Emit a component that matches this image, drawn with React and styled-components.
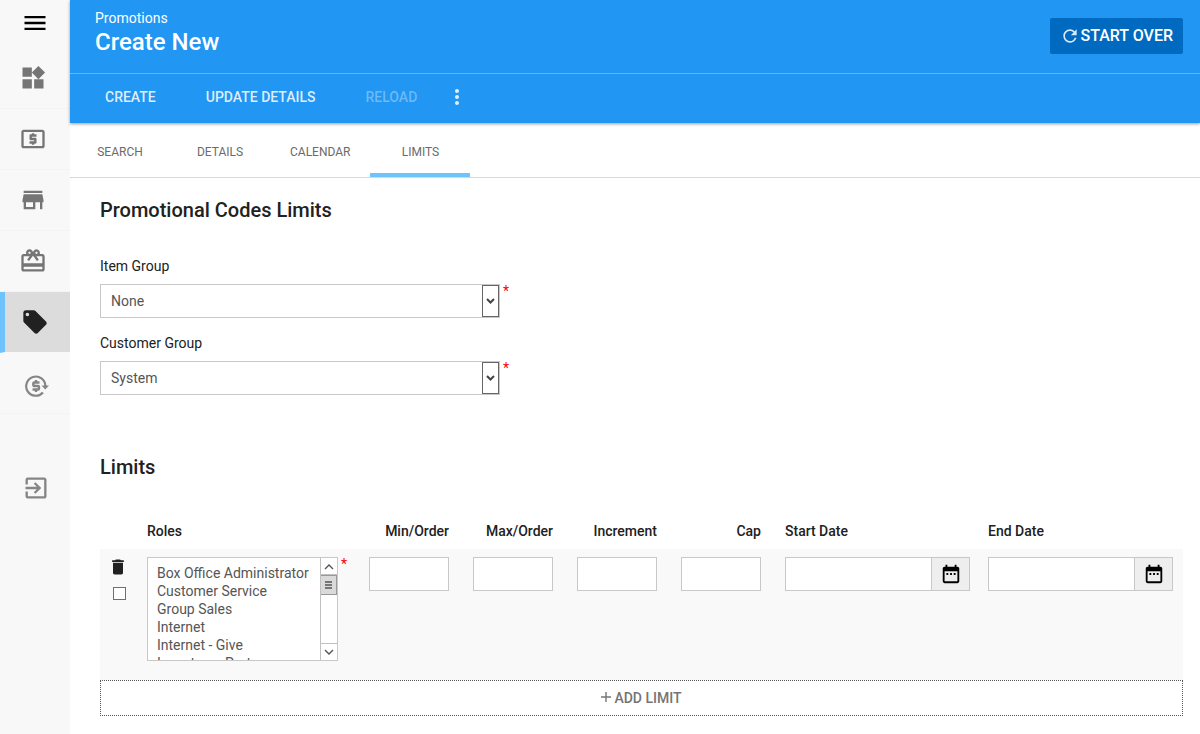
import React, { useRef, useState } from "react";
import styled, { createGlobalStyle, css } from "styled-components";
import {
  MdMenu,
  MdWidgets,
  MdLocalAtm,
  MdStore,
  MdCardGiftcard,
  MdLocalOffer,
  MdExitToApp,
  MdRefresh,
  MdMoreVert,
  MdDelete,
  MdDateRange,
} from "react-icons/md";

const GlobalStyle = createGlobalStyle`
  *, *::before, *::after {
    box-sizing: border-box;
  }

  body {
    margin: 0;
    background: #fff;
    color: #212121;
    font: 14px/20px Roboto, "Liberation Sans", sans-serif;
  }

  button, input, select {
    font: inherit;
    color: inherit;
    margin: 0;
    border-radius: 0;
  }

  button {
    padding: 0;
    border: 0;
    background: none;
    cursor: pointer;
  }
`;

const Page = styled.div`
  display: flex;
  min-height: 100vh;
`;

const Sidebar = styled.nav`
  flex: 0 0 70px;
  display: flex;
  flex-direction: column;
  background: #f8f8f8;
  color: #757575;
`;

const MenuButton = styled.button`
  display: flex;
  align-items: center;
  justify-content: center;
  height: 48px;
  padding-bottom: 2px;
  color: #000;
`;

const SideLink = styled.a`
  display: flex;
  align-items: center;
  height: 61px;
  padding-left: 19px;
  border-bottom: 1px solid #f4f4f4;
  color: inherit;

  ${(p) =>
    p.$muted &&
    css`
      padding-top: 6px;
      padding-left: 22px;
      color: #858585;
    `}

  ${(p) =>
    p.$active &&
    css`
      padding-left: 16px;
      border-left: 5px solid #6ec3ff;
      border-bottom-color: #f8f8f8;
      background: #dcdcdc;
      background-clip: padding-box;
      color: #212121;
    `}

  ${(p) =>
    p.$last &&
    css`
      margin-top: 40px;
      border-bottom: 0;
    `}
`;

const Main = styled.div`
  flex: 1;
  min-width: 0;
`;

const Header = styled.header`
  position: relative;
  background: #2196f3;
  color: #fff;
  box-shadow: 0 1px 3px rgba(0, 0, 0, 0.4);
`;

const TitleBar = styled.div`
  display: flex;
  align-items: center;
  justify-content: space-between;
  height: 74px;
  padding: 0 17px 2px 25px;
  border-bottom: 1px solid #64b5f6;
`;

const TitleBlock = styled.div`
  padding-bottom: 7px;
`;

const Title = styled.h1`
  margin: 0;
  font-size: 24px;
  line-height: 28px;
  font-weight: 500;
`;

const StartOver = styled.button`
  display: flex;
  align-items: center;
  gap: 1px;
  height: 36px;
  padding: 1px 10px 0;
  border-radius: 2px;
  background: #0069c0;
  font-size: 16px;
  font-weight: 500;

  svg {
    opacity: 0.85;
  }
`;

const Toolbar = styled.div`
  display: flex;
  align-items: center;
  height: 49px;
  padding: 0 10px 3px;
`;

const ToolButton = styled.button`
  height: 100%;
  padding: 0 25px;
  color: rgba(255, 255, 255, 0.85);
  font-weight: 500;

  &:disabled {
    color: rgba(255, 255, 255, 0.35);
  }
`;

const MoreButton = styled.button`
  display: flex;
  align-items: center;
  height: 100%;
  padding-left: 3px;
  color: rgba(255, 255, 255, 0.85);
`;

const Tabs = styled.div`
  display: flex;
  height: 55px;
  border-bottom: 1px solid #d9d9d9;
`;

const Tab = styled.button`
  min-width: 100px;
  padding: 8px 20px 0;
  border-bottom: 4px solid ${(p) => (p.$active ? "#6ec3ff" : "transparent")};
  color: #6b6b6b;
  font-size: 12px;
`;

const Content = styled.main`
  padding: 20px 17px 18px 30px;
`;

const Heading = styled.h2`
  margin: 0;
  font-size: 20px;
  line-height: 24px;
  font-weight: 500;
`;

const Fields = styled.div`
  display: flex;
  flex-direction: column;
  gap: 15px;
  padding: 34px 0 60px;
`;

const Label = styled.label`
  display: block;
  margin-bottom: 8px;
`;

const Required = styled.span`
  color: #f00;
  line-height: 14px;
`;

const Control = styled.div`
  display: flex;
  align-items: flex-start;
  gap: 3px;
`;

const SelectWrap = styled.div`
  position: relative;
  width: 400px;

  svg {
    position: absolute;
    top: 1px;
    right: 1px;
    pointer-events: none;
  }
`;

const Select = styled.select`
  appearance: none;
  display: block;
  width: 100%;
  height: 34px;
  padding: 0 28px 0 10px;
  border: 1px solid #c8c8c8;
  background: #fff;
  color: #555;
`;

const Table = styled.table`
  width: 100%;
  margin-top: 42px;
  table-layout: fixed;
  border-collapse: collapse;

  th {
    height: 28px;
    padding: 0;
    font-weight: 500;
    text-align: left;
    vertical-align: top;
  }

  td {
    height: 131px;
    padding: 8px 0;
    background: #f9f9f9;
    vertical-align: top;
  }

  th.number,
  td.number {
    padding-right: 24px;
    text-align: right;
  }

  td.start {
    padding-right: 14px;
  }

  th.end {
    padding-left: 4px;
  }

  td.end {
    padding-right: 10px;
    padding-left: 4px;
  }
`;

const RowTools = styled.div`
  display: flex;
  flex-direction: column;
  align-items: flex-start;
  gap: 10px;
  padding-left: 8px;

  button {
    display: flex;
  }
`;

const Checkbox = styled.input`
  appearance: none;
  width: 13px;
  height: 13px;
  margin-left: 5px;
  border: 1px solid #707070;
  background: #fff;

  &:checked {
    background: #2196f3;
  }
`;

const ListBox = styled.div`
  display: flex;
  width: 191px;
  height: 104px;
  border: 1px solid #c8c8c8;
  background: #fff;
`;

const RoleList = styled.select`
  flex: 1;
  min-width: 0;
  height: 100%;
  padding: 7px 0 0 7px;
  border: 0;
  outline: 0;
  background: #fff;
  color: #555;
  scrollbar-width: none;

  option {
    min-height: 18px;
    padding: 0 2px;
    line-height: 18px;
  }
`;

const Scrollbar = styled.div`
  flex: 0 0 17px;
  display: flex;
  flex-direction: column;
  border-left: 1px solid #c0c0c0;
  color: #555;

  svg {
    display: block;
  }
`;

const ScrollButton = styled.button`
  flex: 0 0 17px;
  border: 0 solid #c0c0c0;
  border-${(p) => p.$edge}-width: 1px;
`;

const Track = styled.div`
  flex: 1;
`;

const Thumb = styled.div`
  height: 20px;
  padding-top: 1px;
  border: 1px solid #999;
  border-left: 0;
  background: #dadada;
`;

const TextInput = styled.input`
  width: 100%;
  min-width: 0;
  height: 34px;
  padding: 0 8px;
  border: 1px solid #c8c8c8;
  background: #fff;
`;

const DateGroup = styled.div`
  display: flex;
`;

const DateButton = styled.button`
  flex: 0 0 38px;
  display: flex;
  align-items: center;
  justify-content: center;
  height: 34px;
  border: 1px solid #c8c8c8;
  border-left: 0;
  background: #eee;
  color: #000;
`;

const AddLimit = styled.button`
  display: flex;
  align-items: center;
  justify-content: center;
  gap: 3px;
  width: 100%;
  height: 36px;
  border: 1px dotted #555;
  color: #757575;
  font-weight: 500;

  svg {
    margin-bottom: 2px;
  }
`;

const RefundIcon = () => (
  <svg width="28" height="28" viewBox="0 0 28 28" fill="none" stroke="currentColor">
    <path d="M21 20.500A9.600 9.600 0 1 1 23.400 14" strokeWidth="2.200" />
    <path d="M19.500 13.500H27L23.200 17.500Z" fill="currentColor" stroke="none" />
    <path
      d="M17.500 10.500H12.300Q11.300 10.500 11.300 11.500V13Q11.300 14 12.300 14H16Q17 14 17 15V16.500Q17 17.500 16 17.500H10.500M14 8V11M14 17V20"
      strokeWidth="2.400"
    />
  </svg>
);

const PlusIcon = () => (
  <svg width="10" height="10" stroke="currentColor">
    <path d="M5 0V10M0 5H10" strokeWidth="1.400" />
  </svg>
);

const links = [
  { name: "Dashboard", icon: <MdWidgets size={28} /> },
  { name: "Sales", icon: <MdLocalAtm size={28} /> },
  { name: "Store", icon: <MdStore size={28} /> },
  { name: "Gift cards", icon: <MdCardGiftcard size={28} /> },
  { name: "Promotions", icon: <MdLocalOffer size={28} />, active: true },
  { name: "Refunds", icon: <RefundIcon />, muted: true },
  { name: "Log out", icon: <MdExitToApp size={28} />, muted: true, last: true },
];

const tabs = ["SEARCH", "DETAILS", "CALENDAR", "LIMITS"];

const roles = [
  "Box Office Administrator",
  "Customer Service",
  "Group Sales",
  "Internet",
  "Internet - Give",
  "Inventory - Partner",
  "Inventory Manager",
  "Marketing",
  "Membership",
  "Operations",
  "Reports",
  "Reseller",
  "Supervisor",
  "System",
  "Ticket Agent",
  "Ticket Manager",
  "Usher",
  "Venue",
];

const numberColumns = ["Min/Order", "Max/Order", "Increment", "Cap"];

function SelectField({ id, label, value }) {
  return (
    <div>
      <Label htmlFor={id}>{label}</Label>
      <Control>
        <SelectWrap>
          <Select id={id} defaultValue={value}>
            <option>{value}</option>
          </Select>
          <svg width="17" height="32" fill="none">
            <rect x="0.500" y="0.500" width="16" height="31" fill="#fff" stroke="#666" />
            <path d="M5 14L8.500 17.500L12 14" stroke="#444" strokeWidth="2" />
          </svg>
        </SelectWrap>
        <Required>*</Required>
      </Control>
    </div>
  );
}

function RolePicker() {
  const list = useRef(null);
  const [offset, setOffset] = useState(0);

  // the track leaves 48px for the thumb to travel
  const onScroll = (e) => {
    const { scrollTop, scrollHeight, clientHeight } = e.currentTarget;
    setOffset((scrollTop / (scrollHeight - clientHeight)) * 48);
  };

  const scroll = (by) => list.current.scrollBy(0, by);

  return (
    <ListBox>
      <RoleList ref={list} multiple aria-label="Roles" onScroll={onScroll}>
        {roles.map((r) => (
          <option key={r}>{r}</option>
        ))}
      </RoleList>
      <Scrollbar>
        <ScrollButton type="button" $edge="bottom" aria-label="Scroll up" onClick={() => scroll(-18)}>
          <svg width="16" height="16" fill="none" stroke="currentColor">
            <path d="M4 11L8 7L12 11" strokeWidth="1.400" />
          </svg>
        </ScrollButton>
        <Track>
          <Thumb style={{ marginTop: offset }}>
            <svg width="15" height="16" fill="none" stroke="currentColor">
              <path d="M4 5H11M4 8H11M4 11H11" strokeWidth="1.500" />
            </svg>
          </Thumb>
        </Track>
        <ScrollButton type="button" $edge="top" aria-label="Scroll down" onClick={() => scroll(18)}>
          <svg width="16" height="16" fill="none" stroke="currentColor">
            <path d="M4 6L8 10L12 6" strokeWidth="1.400" />
          </svg>
        </ScrollButton>
      </Scrollbar>
    </ListBox>
  );
}

function DateField({ label }) {
  return (
    <DateGroup>
      <TextInput type="text" aria-label={label} />
      <DateButton type="button" aria-label={`Pick ${label}`}>
        <MdDateRange size={22} />
      </DateButton>
    </DateGroup>
  );
}

function App() {
  const [tab, setTab] = useState("LIMITS");

  return (
    <React.Fragment>
      <GlobalStyle />
      <Page>
        <Sidebar>
          <MenuButton aria-label="Menu">
            <MdMenu size={28} />
          </MenuButton>
          {links.map((l) => (
            <SideLink
              key={l.name}
              href="#"
              aria-label={l.name}
              $active={l.active}
              $muted={l.muted}
              $last={l.last}
            >
              {l.icon}
            </SideLink>
          ))}
        </Sidebar>
        <Main>
          <Header>
            <TitleBar>
              <TitleBlock>
                <div>Promotions</div>
                <Title>Create New</Title>
              </TitleBlock>
              <StartOver>
                <MdRefresh size={20} />
                START OVER
              </StartOver>
            </TitleBar>
            <Toolbar>
              <ToolButton>CREATE</ToolButton>
              <ToolButton>UPDATE DETAILS</ToolButton>
              <ToolButton disabled>RELOAD</ToolButton>
              <MoreButton aria-label="More">
                <MdMoreVert size={24} />
              </MoreButton>
            </Toolbar>
          </Header>
          <Tabs>
            {tabs.map((t) => (
              <Tab key={t} $active={t === tab} onClick={() => setTab(t)}>
                {t}
              </Tab>
            ))}
          </Tabs>
          <Content>
            <Heading>Promotional Codes Limits</Heading>
            <Fields>
              <SelectField id="item-group" label="Item Group" value="None" />
              <SelectField id="customer-group" label="Customer Group" value="System" />
            </Fields>
            <Heading>Limits</Heading>
            <Table>
              <colgroup>
                <col width="47" />
                <col width="222" />
                {numberColumns.map((c) => (
                  <col key={c} width="104" />
                ))}
                <col />
                <col />
              </colgroup>
              <thead>
                <tr>
                  <th />
                  <th>Roles</th>
                  {numberColumns.map((c) => (
                    <th key={c} className="number">
                      {c}
                    </th>
                  ))}
                  <th>Start Date</th>
                  <th className="end">End Date</th>
                </tr>
              </thead>
              <tbody>
                <tr>
                  <td>
                    <RowTools>
                      <button type="button" aria-label="Delete limit">
                        <MdDelete size={20} color="#212121" />
                      </button>
                      <Checkbox type="checkbox" aria-label="Select limit" />
                    </RowTools>
                  </td>
                  <td>
                    <Control>
                      <RolePicker />
                      <Required>*</Required>
                    </Control>
                  </td>
                  {numberColumns.map((c) => (
                    <td key={c} className="number">
                      <TextInput type="text" aria-label={c} />
                    </td>
                  ))}
                  <td className="start">
                    <DateField label="Start Date" />
                  </td>
                  <td className="end">
                    <DateField label="End Date" />
                  </td>
                </tr>
              </tbody>
            </Table>
            <AddLimit type="button">
              <PlusIcon />
              ADD LIMIT
            </AddLimit>
          </Content>
        </Main>
      </Page>
    </React.Fragment>
  );
}

export default App;
